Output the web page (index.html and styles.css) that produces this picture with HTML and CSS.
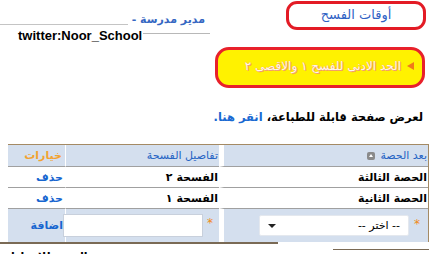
FILE: index.html
```html
<!DOCTYPE html>
<html lang="ar" dir="rtl">
<head>
    <meta charset="UTF-8">
    <title>أوقات الفسح</title>
    <link rel="stylesheet" href="styles.css">
</head>
<body>
    <div class="top">
        <div class="pageTitle">أوقات الفسح</div>
        <div class="user">
            <div class="userRow">
                <span class="userName">مدير مدرسة -</span>
                <span class="rule"></span>
            </div>
            <div class="twitterRow">
                <span class="twitter">twitter:Noor_School</span>
                <span class="rule"></span>
            </div>
        </div>
    </div>

    <div class="notice">
        <span class="bullet"></span>
        <span class="noticeText">الحد الادنى للفسح ١ والاقصى ٢</span>
    </div>

    <p class="print">لعرض صفحة قابلة للطباعة، <a href="#">انقر هنا.</a></p>

    <table class="grid">
        <thead>
            <tr>
                <th class="colPeriod"><span class="clip">بعد الحصة <span class="sortIcon"></span></span></th>
                <th class="colDetails"><span class="clip">تفاصيل الفسحة</span></th>
                <th class="colOptions">خيارات</th>
            </tr>
        </thead>
        <tbody>
            <tr>
                <td>الحصة الثالثة</td>
                <td>الفسحة ٢</td>
                <td><a href="#" class="action">حذف</a></td>
            </tr>
            <tr>
                <td>الحصة الثانية</td>
                <td>الفسحة ١</td>
                <td><a href="#" class="action">حذف</a></td>
            </tr>
            <tr class="addRow">
                <td>
                    <div class="field">
                        <span class="req">*</span>
                        <div class="select"><span>-- اختر --</span><span class="arrow"></span></div>
                    </div>
                </td>
                <td>
                    <div class="field">
                        <span class="req">*</span>
                        <input type="text" class="textBox">
                    </div>
                </td>
                <td><a href="#" class="action">اضافة</a></td>
            </tr>
        </tbody>
    </table>

    <div class="footer">
        <div class="footRight"></div>
        <div class="footLeft"><span class="cut">العودة للإعدادات</span></div>
    </div>
</body>
</html>
```

FILE: styles.css
```css
* {
    margin: 0;
    padding: 0;
    box-sizing: border-box;
}

body {
    font-family: "DejaVu Sans", sans-serif;
    background: #fff;
    color: #000;
    width: 429px;
    height: 254px;
    overflow: hidden;
}

a {
    text-decoration: none;
    color: #1766d0;
}

.top {
    display: flex;
    justify-content: space-between;
    height: 47px;
}

.pageTitle {
    width: 140px;
    height: 29px;
    margin: 1px 3px 0 0;
    border: 3px solid #e31b25;
    border-radius: 11px;
    color: #2f62c4;
    font-size: 13px;
    text-align: center;
    line-height: 22px;
}

.user {
    width: 212px;
    padding-top: 12px;
}

.userRow {
    display: flex;
    height: 15px;
}

.userName {
    color: #3567c2;
    font-size: 11px;
    font-weight: bold;
    margin-right: 7px;
    line-height: 15px;
    white-space: nowrap;
}

.userRow .rule {
    flex: 1;
    height: 13px;
    margin-right: 4px;
    border-bottom: 1px solid #c4c4c4;
}

.twitterRow {
    display: flex;
    direction: ltr;
    margin-right: 2px;
    padding-top: 1px;
}

.twitter {
    font-family: "Liberation Sans", Arial, sans-serif;
    font-weight: bold;
    font-size: 13px;
    line-height: 15px;
    padding-left: 18px;
}

.twitterRow .rule {
    flex: 1;
    height: 6px;
    margin-left: 1px;
    border-bottom: 1px solid #b8b8b8;
}

.notice {
    display: flex;
    align-items: center;
    width: 210px;
    height: 41px;
    margin-right: 4px;
    background: #fff200;
    border: 3px solid #e8212b;
    border-radius: 14px;
    padding-right: 8px;
}

.bullet {
    width: 0;
    height: 0;
    border-top: 4px solid transparent;
    border-bottom: 4px solid transparent;
    border-right: 7px solid #f07a1a;
    margin-left: 6px;
    margin-top: -3px;
}

.noticeText {
    color: #fff6ec;
    font-size: 12px;
    text-shadow: 0 0 1px #f08a50, 1px 1px 0 #f3a070;
    margin-top: -3px;
}

.print {
    font-size: 11.5px;
    font-weight: bold;
    margin: 18px 6px 0 0;
    line-height: 22px;
}

.print a {
    color: #1a6ad2;
}

.grid {
    margin-top: 16px;
    width: 421px;
    table-layout: fixed;
    border-collapse: separate;
    border-spacing: 0;
    border-top: 1px solid #a48a64;
    border-right: 1px solid #a48a64;
    font-size: 11px;
}

.grid th {
    background: #d4dfee;
    height: 22px;
    font-weight: normal;
    color: #2563c4;
    text-align: right;
    border-bottom: 1px solid #a0a0a0;
    border-left: 1px solid #fff;
    padding: 0;
    overflow: hidden;
}

.clip {
    display: block;
    white-space: nowrap;
    overflow: hidden;
    padding-right: 1px;
}

.colPeriod {
    width: 209px;
}

.colDetails {
    width: 154px;
}

.colOptions {
    width: 57px;
}

.grid .colPeriod,
.grid td:first-child {
    border-left: 5px solid #fff;
}

.grid th.colOptions {
    color: #f2a332;
    font-weight: bold;
    padding-right: 3px;
    border-left: none;
}

.sortIcon {
    display: inline-block;
    width: 8px;
    height: 8px;
    background: #8a8a8a;
    border-radius: 2px;
    vertical-align: middle;
    margin-right: 2px;
    position: relative;
}

.sortIcon:after {
    content: '';
    position: absolute;
    left: 2px;
    top: 2px;
    border-left: 2px solid transparent;
    border-right: 2px solid transparent;
    border-bottom: 3px solid #fff;
}

.grid td {
    height: 21px;
    font-weight: bold;
    border-bottom: 1px solid #a0a0a0;
    border-left: 1px solid #fff;
    padding: 0 1px 0 0;
    white-space: nowrap;
}

.grid td:last-child {
    padding-right: 2px;
    border-left: none;
}

.action {
    font-weight: bold;
}

.addRow td {
    background: #d4dfee;
    height: 33px;
    border-bottom: none;
}

.field {
    display: flex;
    align-items: center;
}

.req {
    color: #f08a18;
    font-size: 12px;
    font-weight: normal;
    align-self: flex-start;
    margin: 2px 7px 0 5px;
}

.addRow td:nth-child(2) .req {
    margin: 2px 5px 0 4px;
}

.select {
    display: flex;
    justify-content: space-between;
    align-items: center;
    width: 150px;
    height: 21px;
    background: #fff;
    border: 1px solid #e4e8ee;
    border-radius: 2px;
    font-weight: normal;
    font-size: 11px;
    padding: 0 8px;
}

.arrow {
    border-left: 4px solid transparent;
    border-right: 4px solid transparent;
    border-top: 4px solid #222;
}

.textBox {
    width: 140px;
    height: 23px;
    border: 1px solid #c8d0dc;
    background: #fff;
}

.footer {
    display: flex;
    justify-content: space-between;
}

.footRight {
    width: 96px;
    margin-top: 7px;
    border-top: 1px solid #7a6a55;
}

.footLeft {
    width: 278px;
    border-top: 2px solid #7a6a55;
    text-align: left;
}

.cut {
    display: inline-block;
    font-size: 11px;
    font-weight: bold;
    margin-top: 6px;
}
```
